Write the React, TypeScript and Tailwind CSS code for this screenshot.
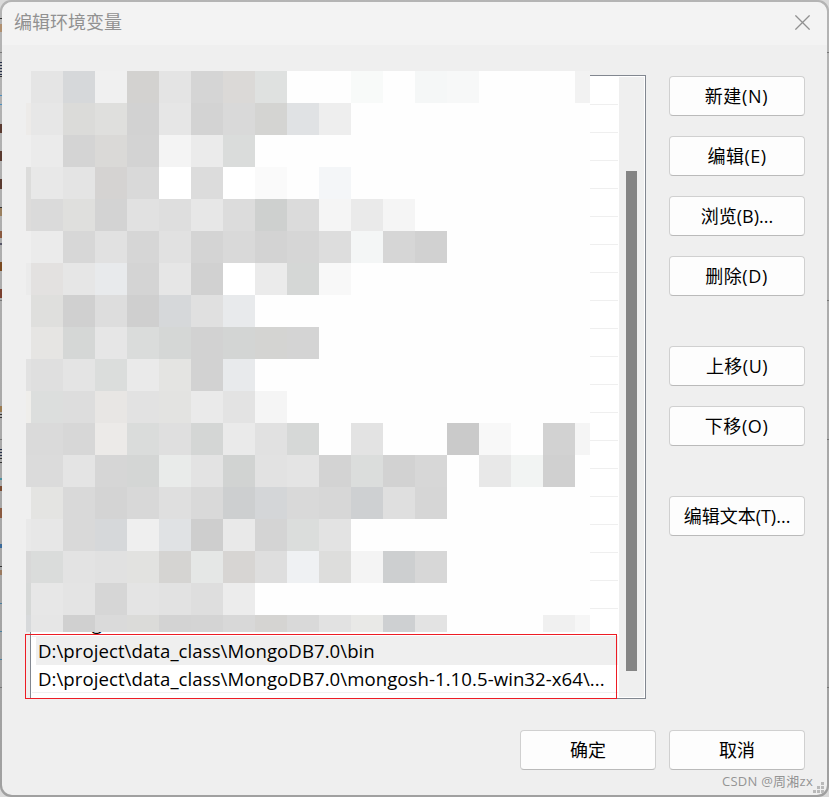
import clsx from 'clsx';

// One string per mosaic row, "w" is plain white
const MOSAIC = [
  'efefef e5e5e5 d6d8da f0f0f0 d3d2d0 e4e4e4 d5d5d5 dbd9d7 dfe1e0 w w f8faf9 w f5f7f7 f7f8f8 w w w f2f2f2',
  'edebe9 e7e7e7 dbdbd9 dfdfdd d2d2d2 e6e6e6 d3d3d3 d9d9d9 d4d4d2 e0e2e4 eeeeee',
  'efefef ebebeb d4d4d4 dad9d7 d3d3d3 f4f4f4 ebebeb dadcdb',
  'dcdcdb e8e8e8 e4e4e4 d5d3d2 d9d9d9 ffffff dcdcdc ffffff fafafa w f4f6f8',
  'dddcdb dadada dfdfdd d3d3d3 e1e1e1 dedede e7e7e7 dcdcdc ced0cf dbdbdb f5f5f5 eaeaea f5f5f5',
  'efefef ebebeb d7d7d7 e1e1e1 d6d6d6 e1e1e1 d4d4d4 d9d9d9 d3d3d3 d6d6d6 dddddd f4f6f6 d6d6d6 d1d1d1',
  'ebebeb e3e1e0 e6e6e6 e8eaec d4d4d4 e6e6e6 d1d1d1 ffffff ebebeb d5d7d6 f8f8f8',
  'efefef dfdfdd d0d0d0 dddddd cfcfcf d6d8da e0e0e0 e8eaec',
  'efefef e6e5e3 d5d7d6 e6e6e6 dadcdb d5d7d6 d2d2d2 d3d5d4 d4d4d2 d4d4d4',
  'e2e2e2 dfdfdf e4e4e4 dbdddc eaeaea e4e4e2 d2d2d2 e8eaec',
  'efeeeb dcdedd dddddd e8e6e4 e2e2e2 e3e3e1 eaeaea e3e3e3 f5f5f5',
  'dadada dadada d7d7d7 eceae8 dadcdb dfdfdf d4d6d5 eaeaea e1e1e1 d6d8d7 w e3e3e3 w w cacaca f8f8f8 w d2d2d2 f5f5f5',
  'dbdbdb dbdbdb e4e4e4 d6d6d6 d4d6d5 e9ebea e3e3e3 d1d3d2 e2e2e2 e4e4e4 d3d3d3 dbdddc d2d2d2 d7d7d7 w e8e8e8 f2f4f3 d0d0d0',
  'efefef e4e4e2 d9d9d9 d4d4d4 d8d8d8 dfdfdf d9d9d9 cdcfd0 d4d6d8 d9d9d9 d7d7d7 ced0d2 dfdfdf d6d6d6',
  'e9e9e9 e7e7e7 d9d9d9 d6d8da efefef e0e2e4 cecece e9e9e9 d4d4d4 dbdddc e3e3e3',
  'd8d8d8 dadcdb e3e3e3 e1e1e1 e2e2e0 d5d4d2 e5e7e6 d7d5d3 dedede eff1f3 dddddc f4f4f4 cdcfd0 d7d7d7',
  'd6d8d7 e7e7e7 e4e4e4 d6d6d6 e4e4e4 e2e2e2 dedede ececec',
  'd7d9db e6e6e6 d0d0d0 dadada dbdbd9 d3d3d3 d4d4d4 d8d8d8 d5d4d2 d9d9d9 e2e2e2 e9e9e7 ced0d2 e3e3e3 w w w f0f0f0 f6f6f6',
];

const HIDDEN_ROWS = Array.from({ length: 20 }, (_, i) => i);
const COLUMNS = Array.from({ length: 19 }, (_, i) => i);

// marks of the window behind the dialog: top, height, colour
const LEFT_MARKS: [number, number, string][] = [
  [18, 1, '#333333'], [24, 8, '#b09070'], [52, 1, '#777777'],
  [62, 1, '#26304a'], [65, 1, '#26304a'], [68, 1, '#26304a'], [71, 1, '#26304a'], [74, 1, '#26304a'], [76, 1, '#333333'],
  [95, 1, '#4a90c0'], [104, 1, '#4a90c0'],
  [124, 9, '#5a3a30'], [151, 10, '#5a3a30'], [179, 10, '#5a3a30'],
  [207, 1, '#333333'], [208, 8, '#9a8060'], [231, 7, '#8a5a40'], [243, 2, '#555566'],
  [262, 9, '#7a4a20'], [289, 9, '#7a4030'], [300, 1, '#777777'],
  [406, 6, '#9a7a50'], [414, 1, '#333333'], [417, 1, '#333333'], [439, 1, '#777777'],
  [449, 1, '#26304a'], [452, 1, '#26304a'], [455, 1, '#26304a'], [458, 1, '#333333'], [462, 1, '#333333'],
  [478, 2, '#4a90a0'], [486, 5, '#7a4a30'],
  [508, 10, '#8a5a40'], [544, 4, '#3a6a9a'], [566, 1, '#333333'], [570, 5, '#9a7a60'],
  [603, 1, '#4a80a0'], [631, 1, '#4a80a0'], [659, 1, '#4a80a0'], [687, 1, '#777777'],
];

const RIGHT_MARKS = [52, 300, 439, 687];

function Button({ label, className }: { label: string; className?: string }) {
  return (
    <button
      type="button"
      className={clsx(
        'flex h-10 w-[136px] items-center justify-center rounded border border-[#d0d0d0] border-b-[#bababa] bg-[#fdfdfd] text-[18px] leading-6 text-black',
        className
      )}
    >
      {label}
    </button>
  );
}

function Mosaic() {
  return (
    <div className="absolute -left-[5px] -top-[5px] flex flex-col">
      {MOSAIC.map((row, y) => {
        const colors = row.split(' ');
        return (
          <div key={y} className={clsx('flex', y === 17 ? 'h-[17px]' : 'h-8')}>
            {COLUMNS.map((x) => (
              <div
                key={x}
                className={clsx(x === 0 ? 'w-[5px]' : x === 18 ? 'w-[15px]' : 'w-8')}
                style={{ backgroundColor: !colors[x] || colors[x] === 'w' ? '#fefefe' : '#' + colors[x] }}
              />
            ))}
          </div>
        );
      })}
    </div>
  );
}

function PathList() {
  return (
    <div className="relative flex h-[624px] w-[616px] border border-[#828790] bg-white p-px">
      <div className="w-[587px] overflow-hidden pr-px text-[18.6px] leading-[28px] tracking-[0.06px] whitespace-nowrap text-black">
        {HIDDEN_ROWS.map((i) => (
          <div key={i} className="h-7 border-b border-[#efefef] pl-1.5">
            {i === 19 ? 'C:\\Program' : ''}
          </div>
        ))}
        <div className="ml-1 h-7 border-b border-[#efefef] bg-[#efefef] pl-[2px]">
          D:\project\data_class\MongoDB7.0\bin
        </div>
        <div className="h-7 border-b border-[#efefef] pl-1.5">
          D:\project\data_class\MongoDB7.0\mongosh-1.10.5-win32-x64\...
        </div>
      </div>
      <div className="w-[25px] bg-[#efefef] pl-[7px] pt-[94px]">
        <div className="h-[500px] w-[11px] bg-[#858585]" />
      </div>
      <Mosaic />
      <div className="absolute -left-[6px] top-[558px] h-[65px] w-[592px] border border-[#ed1c24]" />
    </div>
  );
}

export default function App() {
  return (
    <div className="h-[797px] w-[829px] overflow-hidden bg-[#dadada] font-['Open_Sans','Noto_Sans_CJK_SC',sans-serif]">
      <div className="relative h-[797px] w-[829px] rounded-[11px] bg-linear-to-b from-[#b4b4b4] to-[#a0a0a0] p-0.5">
        {LEFT_MARKS.map(([top, height, color]) => (
          <div key={top} className="absolute left-0 w-0.5" style={{ top, height, backgroundColor: color }} />
        ))}
        {RIGHT_MARKS.map((top) => (
          <div key={top} className="absolute right-0 h-px w-0.5 bg-[#777777]" style={{ top }} />
        ))}

        <div className="relative flex h-[793px] w-[825px] flex-col overflow-hidden rounded-[10px] bg-[#efefef]">
          <div className="flex h-[43px] shrink-0 items-center justify-between bg-[#f3f3f3] pb-[3px] pl-3 pr-[17px]">
            <h1 className="text-[18px] leading-6 text-[#919191]">编辑环境变量</h1>
            <svg width="15" height="15" viewBox="0 0 15 15" fill="none" stroke="#919191" strokeWidth="1.3">
              <path d="M0.4 0.4L14.6 14.6M14.6 0.4L0.4 14.6" />
            </svg>
          </div>

          <div className="flex gap-[23px] pl-7 pt-[30px]">
            <PathList />
            <div className="flex flex-col gap-5 pt-px">
              <Button label="新建(N)" className="pr-px tracking-[0.7px]" />
              <Button label="编辑(E)" className="tracking-[0.5px]" />
              <Button label="浏览(B)..." />
              <Button label="删除(D)" className="pr-px tracking-[0.6px]" />
              <Button label="上移(U)" className="mt-[30px] tracking-[0.5px]" />
              <Button label="下移(O)" className="pr-px tracking-[0.6px]" />
              <Button label="编辑文本(T)..." className="mt-[30px]" />
            </div>
          </div>

          <div className="mt-[31px] flex justify-end gap-[13px] pr-[22px]">
            <Button label="确定" />
            <Button label="取消" />
          </div>

          <svg className="absolute bottom-[2px] right-[3px]" width="11" height="11" viewBox="0 0 11 11" fill="#b9b9b9">
            <path d="M8 0h3v3h-3zM4 4h3v3h-3zM8 4h3v3h-3zM0 8h3v3h-3zM4 8h3v3h-3zM8 8h3v3h-3z" />
          </svg>
          <div className="absolute bottom-[5px] right-[14px] text-[13px] leading-[18px] tracking-[0.25px] whitespace-nowrap text-[#949494]">
            CSDN @周湘zx
          </div>
        </div>
      </div>
    </div>
  );
}
